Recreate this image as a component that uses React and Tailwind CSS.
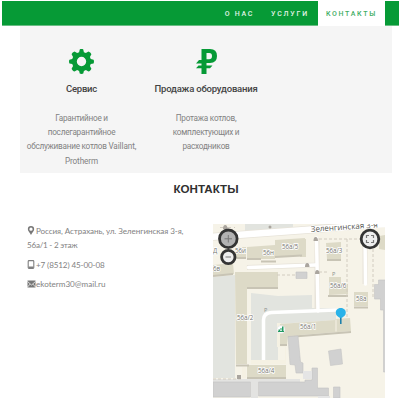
import React from "react";

const navItem = "flex items-center justify-center whitespace-nowrap pt-[2px] text-[7px] font-medium font-['Roboto','Liberation_Sans',sans-serif]";

function Gear() {
  return (
    <svg viewBox="0 0 24 24" className="h-[25px] w-[25px]" fill="#069a36">
      <path fillRule="evenodd" d="M9.700 3 10.300.4c.6-.5 2.800-.5 3.400 0l.6 2.600 1.900.8 2.500-1.500c1 .2 2.600 1.700 2.800 2.800l-1.400 2.500.8 1.900 2.700.7c.5.7.5 2.900 0 3.600l-2.700.7-.8 1.900 1.400 2.500c-.2 1-1.800 2.600-2.800 2.800l-2.500-1.500-1.900.8-.6 2.600c-.6.5-2.800.5-3.400 0L9.700 21l-1.900-.8-2.500 1.500c-1-.2-2.600-1.800-2.800-2.800l1.400-2.500-.8-1.900-2.700-.7c-.5-.7-.5-2.900 0-3.600L3.100 9.500l.8-1.900L2.500 5.100c.2-1.100 1.800-2.600 2.800-2.800l2.500 1.500zM12 7.500a4.500 4.500 0 1 0 0 9 4.500 4.500 0 0 0 0-9z" />
    </svg>
  );
}

function Ruble() {
  return (
    <svg viewBox="0 0 21 25" className="h-[25px] w-[21px]" fill="#069a36">
      <path fillRule="evenodd" d="M5.500 0H14Q21 0 21 7T14 14H10.500V16.500H16.500L14 19.300H10.500V25H5.500V19.300H0L2.500 16.500H5.500V14.500H0L3 11H5.500ZM10.500 4V10.200H13Q16 10.200 16 7T13 4Z" />
    </svg>
  );
}

function Pin() {
  return (
    <svg viewBox="0 0 8 10" className="mb-px h-[9px] w-2" fill="#777">
      <path fillRule="evenodd" d="M4 0a3.500 3.500 0 0 1 3.500 3.600C7.500 6 5 7.500 4 10 3 7.500.5 6 .5 3.600A3.500 3.500 0 0 1 4 0zm0 1.800a1.800 1.800 0 1 0 0 3.600 1.800 1.800 0 0 0 0-3.600z" />
    </svg>
  );
}

function Phone() {
  return (
    <svg viewBox="0 0 8 9" className="mb-px h-[9px] w-2">
      <path d="M2 .6h4q.8 0 .8.8v6.200q0 .8-.8.8H2q-.8 0-.8-.8V1.400Q1.200.6 2 .6z" fill="none" stroke="#808080" strokeWidth="1.100" />
      <path d="M1.500 6.500h5v1.700h-5z" fill="#808080" />
    </svg>
  );
}

function Mail() {
  return (
    <svg viewBox="0 0 9 8" className="mb-px h-[8px] w-[9px]">
      <path d="M.5.5h8v7h-8z" fill="#777" />
      <path d="M.5 1.500 4.500 5l4-3.500M.5 7l2.700-3M8.500 7 5.800 4" fill="none" stroke="#fff" strokeWidth=".7" />
    </svg>
  );
}

const buildings = [
  [[235, 247], [246, 247], [246, 257], [235, 258]],
  [[247, 247], [275, 245], [275, 259], [261, 259], [247, 258]],
  [[275, 240], [305, 238], [305, 255], [275, 257]],
  [[213, 265], [233, 263], [234, 274], [213, 276]],
  [[235, 272], [278, 272], [278, 287], [247, 287], [247, 364], [236, 364]],
  [[247, 365], [286, 365], [286, 377], [247, 377]],
  [[326, 243], [341, 242], [341, 259], [327, 259]],
  [[329, 277], [341, 277], [341, 283], [348, 284], [348, 294], [329, 295]],
  [[354, 292], [368, 292], [368, 306], [354, 306]],
  [[280, 324], [335, 320], [335, 319], [350, 318], [351, 331], [300, 335], [288, 336], [287, 344], [280, 344]],
  [[379, 236], [385, 235], [385, 250], [379, 249]],
];

const labels = [
  [213, 253, "Д"], [235, 253, "56и"], [263, 255, "56н"], [282, 249, "56а/5"],
  [213, 271, "6в"], [326, 253, "56а/3"], [330, 288, "56а/6"], [356, 301, "58а"],
  [237, 320, "56а/2"], [300, 329, "56а/1"], [258, 373, "56а/4"],
];

function Map() {
  return (
    <svg viewBox="213 224 172 174" className="mt-[27px] h-[174px] w-[172px] shrink-0">
      <path fill="#f6f3e8" d="M213 224h172v174H213z" />
      <g fill="#e2e4df">
        <path d="M245 224h48v4l-48 3zM213 277l22-2v103h-22z" />
        <path d="M251 293l27 3 34-1v13h24v12l-58 4v40h-27z" />
      </g>
      <g fill="none" stroke="#e7e3d9">
        <path strokeWidth="8" d="M210 237 305 230 385 223" />
        <path strokeWidth="5" d="M247 267.500 315 265M317 238v73M365 236v48" />
      </g>
      <g fill="none" stroke="#fff" strokeLinecap="round">
        <path strokeWidth="6.500" d="M210 237 305 230 385 224" />
        <path strokeWidth="3.500" d="M248.500 267.500 315 265M316.500 238l1.500 73M365 236l.5 48" />
        <path strokeWidth="3.500" d="M263.500 360v-40q0-7 8-7.500l64-2.500" />
      </g>
      <path d="M279 323v22h8v17h-36M244 367v11" fill="none" stroke="#f5f1e3" strokeWidth="4" />
      <path d="M286 344h14v34h-14z" fill="#f6f3e8" />
      <g fill="#dddac7">
        {buildings.map((b, i) => <path key={i} d={"M" + b.map((p) => p.join(" ")).join("L") + "z"} />)}
        <path d="M300 239h6v18h-6z" />
      </g>
      <g fill="none" stroke="#c8c4b5" strokeWidth="2">
        <path d="M236 258h10M247 259h14M261 261.500h15M275 257l27-1.500M213 276l20-2M247 288h31M236 365.500h13M247 378h39M327 260h14M328 296h20M354 307.500h14M280 345h7M288 337l63-5" />
      </g>
      <path d="M336 319.500v12" stroke="#eeeadc" strokeWidth="1.500" />
      <path d="M213 379h87v3h-42v16h-7v-16h-38z" fill="#e3e3e1" />
      <g fill="#d1d1d1" stroke="#c4c4c4" strokeWidth=".6">
        <path d="M213 382h37.500v15H213zM258.500 382H305v-2h7v-12h5.500v20h11v8h-70zM288 336.500l10-.5 2.500 26 2.500 1v10h-7l-1-8-5-.5zM296 272h11v6.500h-11zM328.500 351l12.500-2 1.500 15-12 1.500zM374.500 284.500h4V280h7v92h-2v-62h-3v-11h-6zM333.500 387h6.500v11h-6.500z" />
      </g>
      <path d="M303 371h9v8h-9zM318 396h12v2h-12z" fill="#e5e5e5" />
      <path d="M213 379h28M347 239v80M319 239h41M319 272h10M373 249v50M277 275h18" fill="none" stroke="#d2ccc0" strokeDasharray="3 2" />
      <path d="M220 227.500h15" fill="none" stroke="#d3cdc3" strokeDasharray="4 3" />
      <g fill="#aaa59e">
        <path d="M223 229q0-4 2.200-4t2.300 4zM313.500 241q0-4 2.200-4t2.300 4zM305 267q0-4 2.200-4t2.300 4zM315 274q0-4 2.200-4t2.300 4z" />
        <circle cx="270" cy="227" r="1.500" /><path d="M237 375h4v4h-4z" />
      </g>
      <g fill="#8e938f" fontSize="5.500" fontFamily="'Noto Sans', sans-serif">
        <text x="332" y="276">P</text><text x="264" y="312">P</text>
      </g>
      <g fill="#74746d" stroke="#fff" strokeWidth="1.500" paintOrder="stroke" fontSize="6.200" fontFamily="'Open Sans','Noto Sans',sans-serif">
        {labels.map(([x, y, text]) => <text key={text} x={x} y={y}>{text}</text>)}
        <text x="311" y="232" transform="rotate(-4 311 232)" fontSize="8" textLength="67" lengthAdjust="spacingAndGlyphs" fill="#55554f">Зеленгинская 3-я</text>
      </g>
      <circle cx="281" cy="329.500" r="4" fill="#fff" stroke="#ddd" strokeWidth=".5" />
      <path d="M278.500 331v-1.500h1.500v1.500zm2-.5v-2.500h1v2.500zm1.500.5v-4.500h1.500v4.500zM278 331h6v1h-6z" fill="#249b64" />
      <g fill="#eee" stroke="#343434" strokeWidth="2.800">
        <circle cx="228.300" cy="257" r="6.700" />
        <circle cx="228.300" cy="238.800" r="8.800" fill="#b2b2b2" />
        <circle cx="370" cy="239" r="8.800" />
      </g>
      <path d="M224.500 238.800h7.500M228.300 235v7.500M225.500 257h5.500" stroke="#777" />
      <path d="M366.500 238v-2.500h2.500m2 0h2.500v2.500m0 2v2.500H371m-2 0h-2.500V240" fill="none" stroke="#777" strokeWidth="1.200" />
      <path d="M340.800 316v8" stroke="#147ba9" strokeWidth="1.500" />
      <path d="M335.800 312.500c0-6 10-6 10 0 0 3-2 4-3.800 5.300h-2.400c-1.900-1.300-3.800-2.300-3.800-5.300z" fill="#29b2e9" />
    </svg>
  );
}

export default function App() {
  return (
    <div className="h-[400px] w-[400px] overflow-hidden bg-white pt-px text-[#828282]">
      <nav className="ml-[2px] flex h-[25px] w-[397px] justify-end border-b border-[#69bd83] bg-[#069a36] pr-[14px] text-[#e2f4e7]">
        <div className={navItem + " w-[45px] tracking-[1.7px]"}>О НАС</div>
        <div className={navItem + " w-[56px] tracking-[1.8px]"}>УСЛУГИ</div>
        <div className={navItem + " h-[25px] w-[67px] bg-white tracking-[1.7px] text-[#3fad63]"}>КОНТАКТЫ</div>
      </nav>
      <section className="ml-5 flex h-[147px] w-[372px] bg-[#f5f5f5] text-center font-['Roboto','Liberation_Sans',sans-serif]">
        <article className="flex w-[123px] flex-col items-center pt-[23px]">
          <Gear />
          <h3 className="mt-[7px] whitespace-nowrap text-[9.500px] font-medium leading-4 tracking-[-0.2px] text-[#444]">Сервис</h3>
          <p className="mt-[14px] whitespace-nowrap text-[8.200px] leading-[14.200px] tracking-[-0.25px]">Гарантийное и<br />послегарантийное<br />обслуживание котлов <span className="tracking-[-0.1px]">Vaillant,<br />Protherm</span></p>
        </article>
        <article className="flex w-[126px] flex-col items-center pt-[23px]">
          <Ruble />
          <h3 className="mt-[7px] whitespace-nowrap text-[9.500px] font-medium leading-4 tracking-[-0.2px] text-[#444]">Продажа оборудования</h3>
          <p className="mt-[14px] whitespace-nowrap text-[8.200px] leading-[14.200px] tracking-[-0.25px]">Протажа котлов,<br />комплектующих и<br />расходников</p>
        </article>
      </section>
      <h2 className="ml-5 mt-2 h-4 w-[372px] text-center font-['Liberation_Sans',sans-serif] text-[11.600px] font-bold leading-4 text-[#303030]">КОНТАКТЫ</h2>
      <section className="ml-[27px] flex">
        <address className="w-[186px] whitespace-nowrap pt-[27px] font-['Lato','Liberation_Sans',sans-serif] text-[8.100px] not-italic leading-[14.300px]">
          <div className="flex items-center gap-px tracking-[-0.09px]"><Pin />Россия, Астрахань, ул. Зеленгинская 3-я,</div>
          <div className="tracking-[-0.25px]">56а/1 - 2 этаж</div>
          <div className="mt-[5px] flex items-center gap-px tracking-[-0.12px]"><Phone />+7 (8512) 45-00-08</div>
          <div className="mt-[5px] flex items-center"><Mail />ekoterm30@mail.ru</div>
        </address>
        <Map />
      </section>
    </div>
  );
}
